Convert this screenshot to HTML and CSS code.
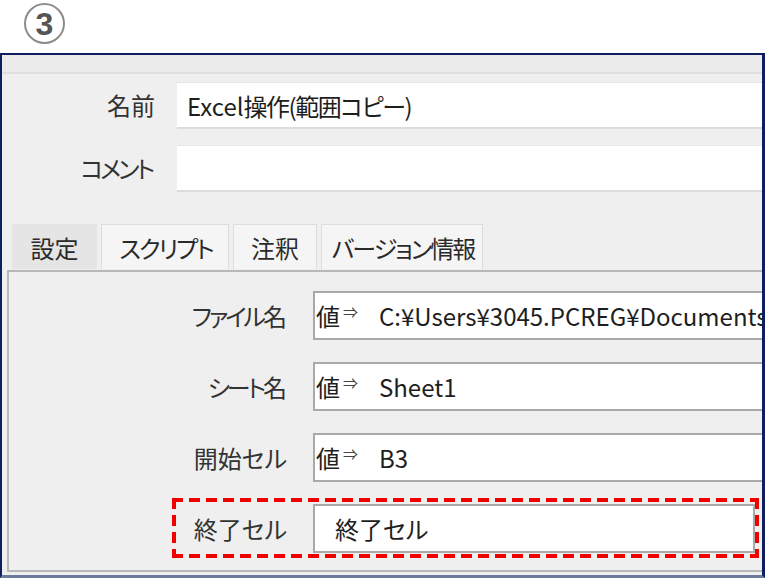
FILE: index.html
```html
<!DOCTYPE html>
<html lang="ja">
<head>
<meta charset="utf-8">
<link rel="stylesheet" href="styles.css">
</head>
<body>
<header class="top"><span class="step">3</span></header>
<div class="window">
  <div class="titlebar"></div>
  <div class="form">
    <div class="row"><span class="lbl">名前</span><div class="field">Excel<span class="tight">操作(範囲コピー)</span></div></div>
    <div class="row"><span class="lbl k">コメント</span><div class="field"></div></div>
  </div>
  <div class="tabs">
    <div class="tab active w1">設定</div>
    <div class="tab w2 k">スクリプト</div>
    <div class="tab w3">注釈</div>
    <div class="tab w4 k">バージョン情報</div>
  </div>
  <div class="panel">
    <div class="prow"><span class="plbl k">ファイル名</span><div class="pfield"><span class="pre">値<span class="arr">⇒</span></span><span class="val">C:¥Users¥3045.PCREG¥Documents</span></div></div>
    <div class="prow"><span class="plbl k">シート名</span><div class="pfield"><span class="pre">値<span class="arr">⇒</span></span><span class="val">Sheet1</span></div></div>
    <div class="prow"><span class="plbl">開始セル</span><div class="pfield"><span class="pre">値<span class="arr">⇒</span></span><span class="val">B3</span></div></div>
    <div class="prow hl"><span class="plbl">終了セル</span><div class="pfield last"><span class="val plain">終了セル</span></div><div class="dash"></div></div>
  </div>
</div>
</body>
</html>
```
FILE: styles.css
```css
html, body { margin: 0; padding: 0; }
body {
  width: 765px;
  height: 578px;
  overflow: hidden;
  background: #fff;
  font-family: "Noto Sans CJK JP", "Noto Sans", sans-serif;
  font-feature-settings: "palt";
  font-size: 24px;
  color: #2a2a2a;
}
.top {
  height: 53px;
  box-sizing: border-box;
  padding: 3px 0 0 24px;
}
.step {
  display: flex;
  width: 41px;
  height: 41px;
  box-sizing: border-box;
  border: 2px solid #8c8c8c;
  border-radius: 50%;
  align-items: center;
  justify-content: center;
  font: bold 32px/1 "Liberation Sans", "DejaVu Sans", sans-serif;
  color: #555;
}
.window {
  height: 525px;
  box-sizing: border-box;
  border-style: solid;
  border-color: #0d1f5c;
  border-bottom-color: #6c7b9c;
  border-width: 2px 3px 3px 2px;
  background: #efefef;
  display: flex;
  flex-direction: column;
  overflow: hidden;
}
.titlebar {
  flex: none;
  height: 17px;
  background: #ebebeb;
  border-bottom: 2px solid #dedede;
}
.form {
  padding-top: 8px;
  display: flex;
  flex-direction: column;
  gap: 16px;
}
.row {
  display: flex;
  align-items: center;
  height: 47px;
}
.lbl {
  flex: none;
  width: 153px;
  text-align: right;
  color: #333;
  margin-top: -2px;
}
.lbl.k, .plbl.k {
  letter-spacing: -3px;
}
.lbl.k { width: 150px; padding-right: 3px; }
.field {
  flex: 1;
  margin-left: 22px;
  height: 47px;
  box-sizing: border-box;
  background: #fff;
  border-top: 1px solid #e6e6e6;
  border-bottom: 2px solid #dcdcdc;
  padding-left: 10px;
  display: flex;
  align-items: center;
  color: #1e1e1e;
  white-space: nowrap;
}
.tight { letter-spacing: -1.5px; }
.tabs {
  margin: 32px 0 0 10px;
  display: flex;
  gap: 4px;
  height: 45px;
}
.tab {
  box-sizing: border-box;
  height: 45px;
  border: 1px solid #dcdcdc;
  border-bottom: none;
  background: #f5f5f5;
  display: flex;
  align-items: center;
  justify-content: center;
  color: #2a2a2a;
}
.tab.k { letter-spacing: -2px; padding-left: 2px; }
.w1 { width: 85px; }
.w2 { width: 128px; }
.w3 { width: 84px; }
.w4 { width: 162px; }
.tab.active {
  background: #e5e5e5;
  border-color: #e5e5e5;
}
.panel {
  flex: 1;
  margin: 1px 0 3px 5px;
  border: 2px solid #b8b8b8;
  border-right: none;
  background: #efefef;
  padding-top: 19px;
  display: flex;
  flex-direction: column;
  gap: 22px;
}
.prow {
  display: flex;
  align-items: center;
  height: 49px;
}
.prow.hl { position: relative; }
.plbl {
  flex: none;
  width: 278px;
  text-align: right;
  color: #333;
}
.plbl.k { width: 275px; padding-right: 3px; }
.pfield {
  flex: 1;
  min-width: 0;
  margin-left: 26px;
  height: 49px;
  box-sizing: border-box;
  background: #fff;
  border: 2px solid #a9a9a9;
  border-right: none;
  display: flex;
  align-items: center;
  padding-left: 1px;
  white-space: nowrap;
  overflow: hidden;
  color: #1e1e1e;
}
.pfield.last {
  margin-right: 7px;
  border-right: 2px solid #a9a9a9;
}
.pre {
  flex: none;
  width: 63px;
  display: flex;
  align-items: flex-start;
}
.arr {
  font-size: 15px;
  line-height: 1;
  color: #444;
  margin: 6px 0 0 3px;
}
.val.plain { padding-left: 19px; }
.dash {
  position: absolute;
  left: 163px;
  right: 3px;
  top: -6px;
  bottom: -5px;
  pointer-events: none;
  background:
    repeating-linear-gradient(90deg, #f20000 0 11px, transparent 11px 17px) left top / 100% 4px no-repeat,
    repeating-linear-gradient(90deg, #f20000 0 11px, transparent 11px 17px) left bottom / 100% 4px no-repeat,
    repeating-linear-gradient(180deg, #f20000 0 11px, transparent 11px 17px) left top / 4px 100% no-repeat,
    repeating-linear-gradient(180deg, #f20000 0 11px, transparent 11px 17px) right top / 4px 100% no-repeat;
}
```
